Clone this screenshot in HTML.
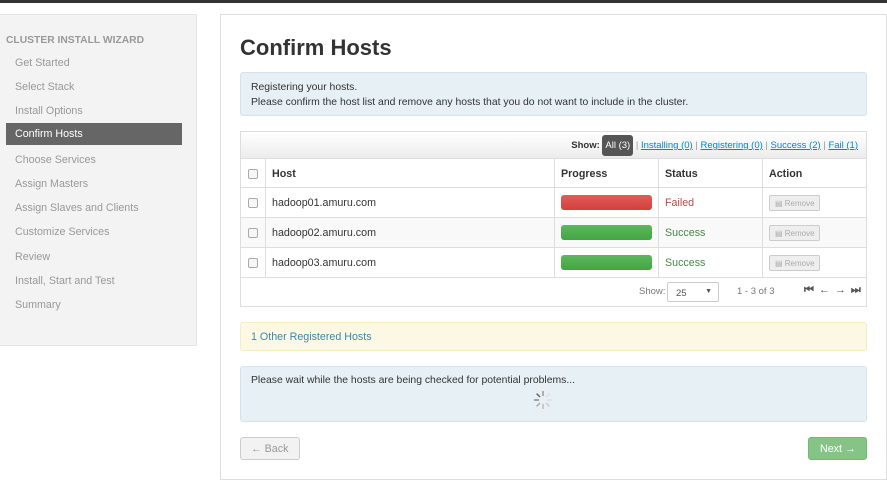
<!DOCTYPE html>
<html><head><style>
*{margin:0;padding:0;box-sizing:border-box}
body{width:887px;height:484px;background:#fff;font-family:"Liberation Sans",Arial,sans-serif;font-size:10.7px;color:#333;position:relative;overflow:hidden}
.a{position:absolute}
.top{left:0;top:0;width:887px;height:3px;background:#333}
.side{left:-1px;top:14px;width:198px;height:332px;background:#f3f3f3;border:1px solid #e3e3e3}
.side .h{position:absolute;left:6px;top:20px;color:#999;font-weight:bold;font-size:10.3px}
.side .i{position:absolute;left:15px;color:#999;font-size:10.7px}
.side .act{position:absolute;left:6px;top:108px;width:176px;height:22px;background:#666;color:#fff;padding:5px 0 0 9px}
.main{left:220px;top:14px;width:667px;height:466px;border:1px solid #ddd;background:#fff}
h1{position:absolute;left:240px;top:35px;font-size:22px;font-weight:bold;color:#333}
.info{left:240px;top:72px;width:627px;height:44px;background:#e7f0f5;border:1px solid #d4e3ec;border-radius:3px;padding:7px 10px;line-height:15px;font-size:10.4px}
.tbl{left:240px;top:131px;width:627px;height:176px;border:1px solid #ddd}
.bar{position:absolute;left:0;top:0;width:625px;height:27px;background:linear-gradient(#fff,#ececec);border-bottom:1px solid #ddd;font-size:9.5px;text-align:right;padding:0 8px 0 0;line-height:27px}
.bar b{background:#555;color:#fff;padding:5px 3px;border-radius:3px;font-weight:normal}
.bar a{color:#0088cc;text-decoration:underline}
.bar .s{color:#999}
.row{position:absolute;left:0;width:625px;height:30px;border-bottom:1px solid #ddd}
.c{position:absolute;top:0;height:100%;border-left:1px solid #ddd;padding:9px 6px 0 6px}
.cb{position:absolute;left:7px;width:10px;height:10px;border:1px solid #aaa;border-radius:2px;background:#f6f6f6}
.pb{position:absolute;left:6px;top:7px;width:91px;height:15px;border-radius:3px}
.rm{position:absolute;left:6px;top:7px;width:51px;height:16px;border:1px solid #ccc;background:#eee;border-radius:2px;color:#aaa;font-size:8px;padding:3px 0 0 5px}
.foot{position:absolute;left:0;top:146px;width:625px;height:28px;font-size:9.5px;color:#777}
.sel{position:absolute;left:426px;top:4px;width:52px;height:20px;border:1px solid #ccc;border-radius:2px;padding:5px 0 0 8px;background:#fff;color:#555}
.oth{left:240px;top:322px;width:627px;height:29px;background:#fcf8e3;border:1px solid #f5ecc4;border-radius:3px;color:#3a87ad;padding:8px 10px}
.wait{left:240px;top:366px;width:627px;height:56px;background:#e7f0f5;border:1px solid #d4e3ec;border-radius:3px;padding:8px 10px;font-size:10.4px}
.back{left:240px;top:437px;width:60px;height:23px;border:1px solid #ccc;background:#f2f2f2;border-radius:3px;color:#999;padding:5px 0 0 10px}
.next{left:808px;top:437px;width:59px;height:23px;background:#85c486;border:1px solid #77b877;border-radius:3px;color:#fff;padding:5px 0 0 11px}
</style></head><body>
<div class="a top"></div>
<div class="a side">
<div class="h">CLUSTER INSTALL WIZARD</div>
<div class="i" style="top:42px">Get Started</div>
<div class="i" style="top:66px">Select Stack</div>
<div class="i" style="top:90px">Install Options</div>
<div class="act">Confirm Hosts</div>
<div class="i" style="top:139px">Choose Services</div>
<div class="i" style="top:163px">Assign Masters</div>
<div class="i" style="top:187px">Assign Slaves and Clients</div>
<div class="i" style="top:211px">Customize Services</div>
<div class="i" style="top:236px">Review</div>
<div class="i" style="top:260px">Install, Start and Test</div>
<div class="i" style="top:284px">Summary</div>
</div>
<div class="a main"></div>
<h1>Confirm Hosts</h1>
<div class="a info">Registering your hosts.<br>Please confirm the host list and remove any hosts that you do not want to include in the cluster.</div>
<div class="a tbl">
<div class="bar"><span style="font-weight:bold;color:#333">Show:</span> <b>All (3)</b> <span class="s">|</span> <a>Installing (0)</a> <span class="s">|</span> <a>Registering (0)</a> <span class="s">|</span> <a>Success (2)</a> <span class="s">|</span> <a>Fail (1)</a></div>
<div class="row" style="top:27px;height:29px;font-weight:bold">
<div class="cb" style="top:10px"></div>
<div class="c" style="left:24px;width:289px">Host</div><div class="c" style="left:313px;width:104px">Progress</div><div class="c" style="left:417px;width:104px">Status</div><div class="c" style="left:521px;width:104px">Action</div></div>
<div class="row" style="top:56px"><div class="cb" style="top:10px"></div>
<div class="c" style="left:24px;width:289px">hadoop01.amuru.com</div><div class="c" style="left:313px;width:104px"><div class="pb" style="background:linear-gradient(#e25c58,#d2403c)"></div></div><div class="c" style="left:417px;width:104px;color:#b94a48">Failed</div><div class="c" style="left:521px;width:104px"><div class="rm">▤ Remove</div></div></div>
<div class="row" style="top:86px;background:#f9f9f9"><div class="cb" style="top:10px"></div>
<div class="c" style="left:24px;width:289px">hadoop02.amuru.com</div><div class="c" style="left:313px;width:104px"><div class="pb" style="background:linear-gradient(#5cb85c,#44a444)"></div></div><div class="c" style="left:417px;width:104px;color:#468847">Success</div><div class="c" style="left:521px;width:104px"><div class="rm">▤ Remove</div></div></div>
<div class="row" style="top:116px"><div class="cb" style="top:10px"></div>
<div class="c" style="left:24px;width:289px">hadoop03.amuru.com</div><div class="c" style="left:313px;width:104px"><div class="pb" style="background:linear-gradient(#5cb85c,#44a444)"></div></div><div class="c" style="left:417px;width:104px;color:#468847">Success</div><div class="c" style="left:521px;width:104px"><div class="rm">▤ Remove</div></div></div>
<div class="foot"><span class="a" style="left:398px;top:8px">Show:</span><div class="sel">25 <span style="float:right;margin-right:6px;font-size:7px">▼</span></div><span class="a" style="left:496px;top:8px">1 - 3 of 3</span><span class="a" style="left:563px;top:6px;color:#555;font-size:11px;font-weight:bold;letter-spacing:5px">⏮←→⏭</span></div>
</div>
<div class="a oth">1 Other Registered Hosts</div>
<div class="a wait">Please wait while the hosts are being checked for potential problems...
<svg class="a" style="left:291px;top:22px" width="22" height="22" viewBox="0 0 22 22"><g stroke="#999" stroke-width="1.5"><line x1="11" y1="2" x2="11" y2="7"/><line x1="4.6" y1="4.6" x2="8" y2="8" stroke="#666"/><line x1="2" y1="11" x2="7" y2="11" stroke="#888"/><line x1="4.6" y1="17.4" x2="8" y2="14" stroke="#aaa"/><line x1="11" y1="20" x2="11" y2="15" stroke="#bbb"/><line x1="17.4" y1="17.4" x2="14" y2="14" stroke="#ccc"/><line x1="20" y1="11" x2="15" y2="11" stroke="#ddd"/><line x1="17.4" y1="4.6" x2="14" y2="8" stroke="#ddd"/></g></svg></div>
<div class="a back">← Back</div>
<div class="a next">Next →</div>
</body></html>
